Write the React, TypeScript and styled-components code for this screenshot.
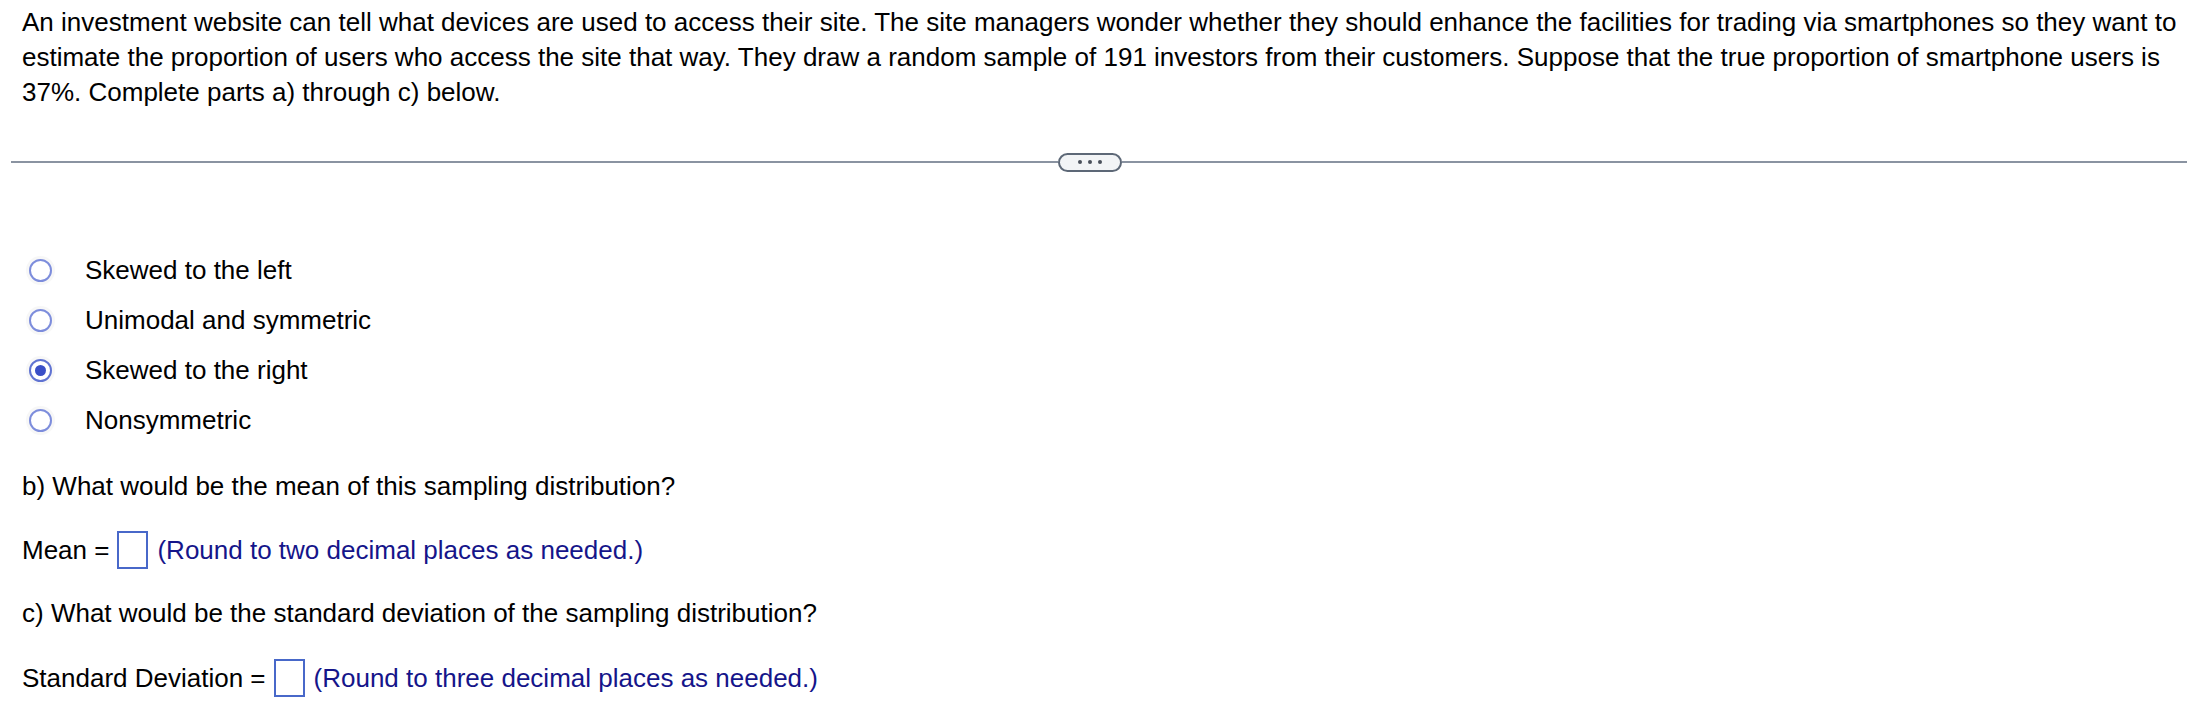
import React from "react";
import styled, { createGlobalStyle } from "styled-components";

const GlobalStyle = createGlobalStyle`
  html, body { margin: 0; padding: 0; background: #ffffff; }
  body { font-family: "Liberation Sans", Arial, Helvetica, sans-serif; color: #000; }
`;

const Page = styled.div`
  width: 2194px;
  box-sizing: border-box;
  padding-top: 5px;
  font-size: 26px;
  line-height: 35px;
`;

const Intro = styled.p`
  margin: 0;
  padding: 0 6px 0 22px;
  line-height: 35px;
`;

const Divider = styled.div`
  display: flex;
  align-items: center;
  padding: 0 7px 0 11px;
  margin-top: 42px;
  height: 20px;
`;

const LeftRule = styled.div`
  width: 1047px;
  height: 2px;
  background: #8a93a1;
`;

const RightRule = styled.div`
  flex: 1;
  height: 2px;
  background: #8a93a1;
`;

const MoreButton = styled.div`
  width: 64px;
  height: 19px;
  box-sizing: border-box;
  border: 2px solid #5d6877;
  border-radius: 10px;
  background: #f2f4f6;
  display: flex;
  align-items: center;
  justify-content: center;
  gap: 6px;
`;

const Dot = styled.span`
  width: 4px;
  height: 4px;
  border-radius: 50%;
  background: #4a505b;
`;

const Options = styled.div`
  display: flex;
  flex-direction: column;
  margin-top: 73px;
`;

const OptionRow = styled.label`
  display: flex;
  align-items: center;
  height: 50px;
  padding-left: 29px;
  gap: 33px;
`;

const Radio = styled.span<{ $checked?: boolean }>`
  width: 23px;
  height: 23px;
  box-sizing: border-box;
  border-radius: 50%;
  border: 2px solid ${(p) => (p.$checked ? "#6073d2" : "#7d8ddc")};
  background: #fff;
  box-shadow: 0 0 0 3px rgba(120, 120, 120, 0.06);
  display: flex;
  align-items: center;
  justify-content: center;
  flex-shrink: 0;
  &::after {
    content: "";
    display: ${(p) => (p.$checked ? "block" : "none")};
    width: 11px;
    height: 11px;
    border-radius: 50%;
    background: #3a4fc7;
  }
`;

const OptionText = styled.span`
  line-height: 35px;
`;

const Question = styled.p<{ $top: number }>`
  margin: ${(p) => p.$top}px 0 0;
  padding: 0 22px;
  line-height: 35px;
`;

const AnswerRow = styled.div<{ $top: number }>`
  display: flex;
  align-items: center;
  margin-top: ${(p) => p.$top}px;
  padding: 0 22px;
  height: 38px;
`;

const AnswerLabel = styled.span`
  white-space: pre;
`;

const AnswerBox = styled.span`
  width: 31px;
  height: 38px;
  box-sizing: border-box;
  border: 2px solid #4868c9;
  margin: 0 9px 0 8px;
  background: #fff;
`;

const Hint = styled.span`
  color: #15158a;
`;

const options = [
  { label: "Skewed to the left", checked: false },
  { label: "Unimodal and symmetric", checked: false },
  { label: "Skewed to the right", checked: true },
  { label: "Nonsymmetric", checked: false },
];

export default function App() {
  return (
    <>
      <GlobalStyle />
      <Page>
        <Intro>
          An investment website can tell what devices are used to access their site. The site managers wonder whether
          they should enhance the facilities for trading via smartphones so they want to estimate the proportion of
          users who access the site that way. They draw a random sample of 191 investors from their customers. Suppose
          that the true proportion of smartphone users is 37%. Complete parts a) through c) below.
        </Intro>
        <Divider>
          <LeftRule />
          <MoreButton>
            <Dot />
            <Dot />
            <Dot />
          </MoreButton>
          <RightRule />
        </Divider>
        <Options>
          {options.map((o) => (
            <OptionRow key={o.label}>
              <Radio $checked={o.checked} />
              <OptionText>{o.label}</OptionText>
            </OptionRow>
          ))}
        </Options>
        <Question $top={24}>b) What would be the mean of this sampling distribution?</Question>
        <AnswerRow $top={27}>
          <AnswerLabel>Mean =</AnswerLabel>
          <AnswerBox />
          <Hint>(Round to two decimal places as needed.)</Hint>
        </AnswerRow>
        <Question $top={27}>c) What would be the standard deviation of the sampling distribution?</Question>
        <AnswerRow $top={28}>
          <AnswerLabel>Standard Deviation =</AnswerLabel>
          <AnswerBox />
          <Hint>(Round to three decimal places as needed.)</Hint>
        </AnswerRow>
      </Page>
    </>
  );
}
